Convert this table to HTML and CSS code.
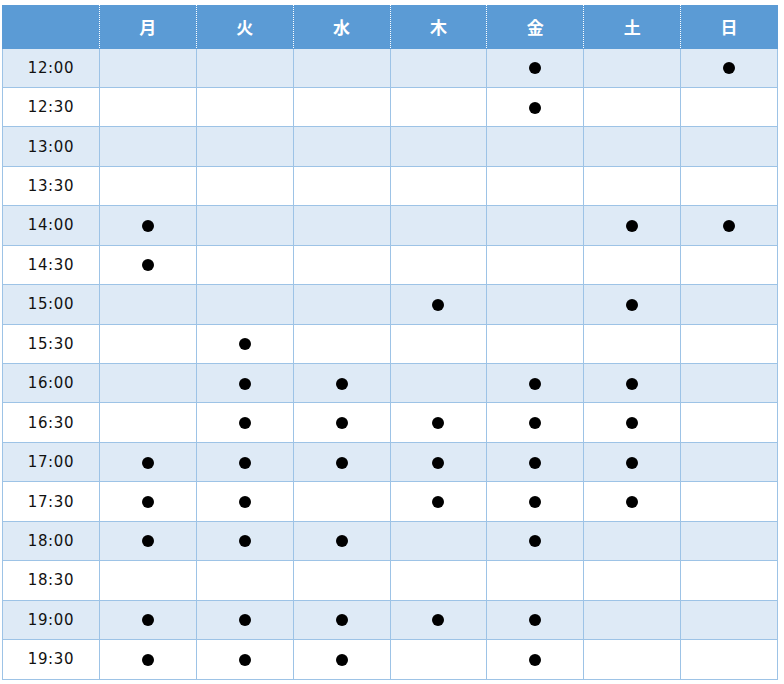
FILE: index.html
```html
<!DOCTYPE html>
<html lang="ja">
<head>
<meta charset="utf-8">
<link rel="stylesheet" href="styles.css">
</head>
<body>
<table class="sched">
<thead>
<tr><th></th><th>月</th><th>火</th><th>水</th><th>木</th><th>金</th><th>土</th><th>日</th></tr>
</thead>
<tbody id="rows">
<tr><td class="t">12:00</td><td></td><td></td><td></td><td></td><td><i class="d"></i></td><td></td><td><i class="d"></i></td></tr>
<tr><td class="t">12:30</td><td></td><td></td><td></td><td></td><td><i class="d"></i></td><td></td><td></td></tr>
<tr><td class="t">13:00</td><td></td><td></td><td></td><td></td><td></td><td></td><td></td></tr>
<tr><td class="t">13:30</td><td></td><td></td><td></td><td></td><td></td><td></td><td></td></tr>
<tr><td class="t">14:00</td><td><i class="d"></i></td><td></td><td></td><td></td><td></td><td><i class="d"></i></td><td><i class="d"></i></td></tr>
<tr><td class="t">14:30</td><td><i class="d"></i></td><td></td><td></td><td></td><td></td><td></td><td></td></tr>
<tr><td class="t">15:00</td><td></td><td></td><td></td><td><i class="d"></i></td><td></td><td><i class="d"></i></td><td></td></tr>
<tr><td class="t">15:30</td><td></td><td><i class="d"></i></td><td></td><td></td><td></td><td></td><td></td></tr>
<tr><td class="t">16:00</td><td></td><td><i class="d"></i></td><td><i class="d"></i></td><td></td><td><i class="d"></i></td><td><i class="d"></i></td><td></td></tr>
<tr><td class="t">16:30</td><td></td><td><i class="d"></i></td><td><i class="d"></i></td><td><i class="d"></i></td><td><i class="d"></i></td><td><i class="d"></i></td><td></td></tr>
<tr><td class="t">17:00</td><td><i class="d"></i></td><td><i class="d"></i></td><td><i class="d"></i></td><td><i class="d"></i></td><td><i class="d"></i></td><td><i class="d"></i></td><td></td></tr>
<tr><td class="t">17:30</td><td><i class="d"></i></td><td><i class="d"></i></td><td></td><td><i class="d"></i></td><td><i class="d"></i></td><td><i class="d"></i></td><td></td></tr>
<tr><td class="t">18:00</td><td><i class="d"></i></td><td><i class="d"></i></td><td><i class="d"></i></td><td></td><td><i class="d"></i></td><td></td><td></td></tr>
<tr><td class="t">18:30</td><td></td><td></td><td></td><td></td><td></td><td></td><td></td></tr>
<tr><td class="t">19:00</td><td><i class="d"></i></td><td><i class="d"></i></td><td><i class="d"></i></td><td><i class="d"></i></td><td><i class="d"></i></td><td></td><td></td></tr>
<tr><td class="t">19:30</td><td><i class="d"></i></td><td><i class="d"></i></td><td><i class="d"></i></td><td></td><td><i class="d"></i></td><td></td><td></td></tr>
</tbody>
</table>
</body>
</html>
```

FILE: styles.css
```css
html, body {
  margin: 0;
  background: #ffffff;
}
body {
  padding: 5px 0 0 2px;
  font-family: "Noto Sans CJK JP", "DejaVu Sans", sans-serif;
}
.sched {
  border-collapse: collapse;
  table-layout: fixed;
  width: 776px;
}
.sched th {
  background: #5b9bd5;
  color: #ffffff;
  font-size: 17px;
  font-weight: 700;
  height: 43px;
  padding: 0;
  text-align: center;
  vertical-align: middle;
  border-left: 1px dotted #ffffff;
  border-bottom: 1px solid #5b9bd5;
  box-sizing: border-box;
}
.sched th:first-child {
  border-left: 1px solid #5b9bd5;
}
.sched th:last-child {
  border-right: 1px solid #5b9bd5;
}
.sched td {
  border: 1px solid #9dc3e6;
  height: 39.45px;
  padding: 0;
  box-sizing: border-box;
  text-align: center;
  vertical-align: middle;
  line-height: 1;
}
.sched tbody tr:nth-child(odd) td {
  background: #deeaf6;
}
.sched td.t {
  font-family: "DejaVu Sans", sans-serif;
  font-size: 15px;
  color: #111111;
  letter-spacing: 0.6px;
  padding-top: 1px;
}
.d {
  display: block;
  width: 12px;
  height: 12px;
  margin: 1px auto 0;
  border-radius: 50%;
  background: #000000;
}
```
